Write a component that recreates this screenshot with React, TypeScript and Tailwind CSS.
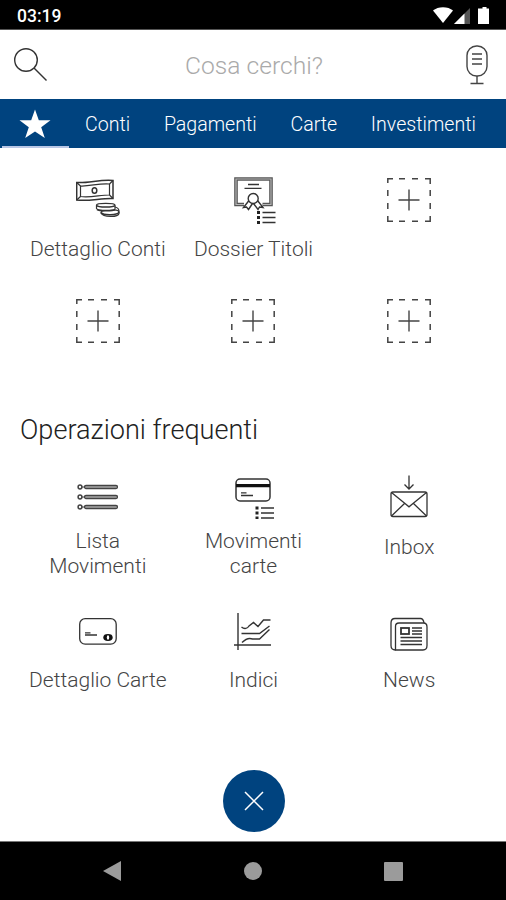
import { useState, type ReactNode } from "react";

interface Operation {
    name: string;
    icon: ReactNode;
    labelClass?: string;
}

const PlusIcon = () => (
    <svg className="w-11 h-11" viewBox="0 0 44 44" fill="none" stroke="#444">
        <path d="M0.8 5V0.8H6M12 0.8h6M25 0.8h6M38 0.8h5.2V6M43.2 12v6M43.2 25v6M43.2 38v5.2H38M31 43.2h-6M18 43.2h-6M6 43.2H0.8V38M0.8 31v-6M0.8 18v-6" strokeWidth="1.5" />
        <path d="M22 11.5v21M11.5 22h21" strokeWidth="1.4" />
    </svg>
)

const MoneyIcon = () => (
    <svg className="w-11 h-11" viewBox="0 0 44 44" fill="none" stroke="#333" strokeWidth="1.2">
        <path d="M0.7 4.500C12 5.500 25 1 37 2.500V20.500C25 20 13 23.500 0.700 22Z" strokeWidth="1.500" />
        <path d="M4.500 8C14 8.500 23 5 33.500 6V17C24 17 14 20 4.500 18.500Z" />
        <path d="M0.700 4.500l3.800 3.500M37 2.500l-3.500 3.500M37 20.500l-3.500-3.500M0.700 22l3.800-3.500" />
        <ellipse cx="18.500" cy="12.500" rx="2.300" ry="2.800" strokeWidth="1.500" />
        <path d="M25 34.500c0-3 18-4 18-0.500v1.500c-1 4-16 4-18-0.500z" fill="#fff" />
        <path d="M25 34.500c2 3 17 3 18-0.500" strokeWidth="1.500" />
        <path d="M20.500 27c0-2.300 18.500-2.300 18.500 0v4c0 2-17 2-18.500-0.500z" fill="#fff" />
        <path d="M20.500 27.500c1.500 2 17 2 18.500 0M21 31.500c2 1.800 16 1.800 18 0" strokeWidth="1.500" />
        <path d="M39 29c2.500 0.500 4 2 4 4.500" />
    </svg>
)

const TitlesIcon = () => (
    <svg className="w-11 h-12 overflow-visible" viewBox="0 0 44 48" fill="none" stroke="#333">
        <path d="M13 26.500H5V1H40V26.500H31.500" stroke="#555" strokeWidth="3.600" />
        <path d="M13 26.500H5V1H40V26.500H31.500" stroke="#b5b5b5" strokeWidth="1.200" />
        <path d="M17 6.500h11M13.500 10.300h17" strokeWidth="1.300" />
        <path d="M18 22.500L12.500 29.500L15.500 29L17.500 31.500L21.500 25.500M26.500 22.500L32 29.500L28.500 29L27 31.500L22.500 25.500" strokeWidth="1.400" />
        <circle cx="22.200" cy="20.500" r="5" strokeWidth="1.400" fill="#fff" />
        <path d="M26 34.500h3M26 39.500h3M26 44.500h3" strokeWidth="2.800" stroke="#222" />
        <path d="M31.500 34.500h13M31.500 39.500h13M31.500 44.500h13" strokeWidth="1.400" />
    </svg>
)

const ListIcon = () => (
    <svg className="w-11 h-11" viewBox="0 0 44 44" fill="none" stroke="#444">
        {[12, 22, 32].map((y) => (
            <g key={y}>
                <circle cx="4" cy={y} r="1.900" strokeWidth="1.500" />
                <path d={`M6 ${y}h2`} />
                <rect x="8.500" y={y - 1.500} width="33" height="3" rx="1.500" strokeWidth="1.300" fill="#aaa" />
            </g>
        ))}
    </svg>
)

const CardListIcon = () => (
    <svg className="w-11 h-11" viewBox="0 0 44 44" fill="none" stroke="#333">
        <rect x="5" y="4" width="34" height="22" rx="4" strokeWidth="1.500" />
        <path d="M5 10.700h34" strokeWidth="3.200" stroke="#111" />
        <path d="M10 17.800h5.500M10 20.500h12" strokeWidth="1.300" />
        <path d="M24.500 33h3M24.500 38h3M24.500 43h3" strokeWidth="2.800" stroke="#222" />
        <path d="M30 33h13M30 38h13M30 43h13" strokeWidth="1.400" />
    </svg>
)

const InboxIcon = () => (
    <svg className="w-11 h-11" viewBox="0 0 44 44" fill="none" stroke="#333" strokeWidth="1.300">
        <path d="M22 0.500v13M17.500 9.500l4.500 4.500L26.500 9.500" />
        <rect x="4" y="17" width="36" height="24.500" rx="2" />
        <path d="M4.500 17.500L18 28.500L22 31.800L26 28.500L39.500 17.500M4.500 41L17.500 28.500M39.500 41L26.500 28.500" />
    </svg>
)

const CardIcon = () => (
    <svg className="w-11 h-11" viewBox="0 0 44 44" fill="none" stroke="#333">
        <rect x="3.700" y="8.700" width="36.500" height="25.500" rx="5.500" strokeWidth="1.300" />
        <path d="M9 22.800h5.500M9 25h12" strokeWidth="1.300" />
        <ellipse cx="32" cy="27.500" rx="4.700" ry="3.400" fill="#111" stroke="none" />
        <ellipse cx="32" cy="27.500" rx="1.200" ry="2.200" fill="#fff" stroke="none" />
    </svg>
)

const ChartIcon = () => (
    <svg className="w-11 h-11" viewBox="0 0 44 44" fill="none" stroke="#333" strokeWidth="1.400">
        <path d="M7 3v37M3 35h37" />
        <path d="M10.500 17c3 2.500 6 1.500 7.500-1l4.500-3.500l4.500 4l5.500-6.500h7" />
        <path d="M10.500 23.500h18l10-7.500" />
        <path d="M11 32.500c4-4 7-5 10.500-3.500h7l10-9.500" />
    </svg>
)

const NewsIcon = () => (
    <svg className="w-11 h-11" viewBox="0 0 44 44" fill="none" stroke="#333" strokeWidth="1.300">
        <path d="M8.500 40c-3 0-4.500-2-4.500-4.500V13c0-3 1.500-4.500 4-4.500h25.500c2 0 3 1.500 3.500 4.500" />
        <path d="M8.500 40V16.500c0-2.500 1-3.500 3.500-3.500h24.500c2.500 0 3.500 1.500 3.500 4v18.500c0 3-1.500 4.500-4 4.500z" />
        <rect x="14" y="18" width="8" height="6" strokeWidth="1.800" />
        <path d="M25 18h10M25 21h10M25 24h10M13.500 27.500h21.500M13.500 31h21.500M13.500 34.500h21.500" />
    </svg>
)

const favourites: Operation[] = [
    { name: "Dettaglio Conti", icon: <MoneyIcon /> },
    { name: "Dossier Titoli", icon: <TitlesIcon /> },
    { name: "", icon: <PlusIcon /> },
    { name: "", icon: <PlusIcon /> },
    { name: "", icon: <PlusIcon /> },
    { name: "", icon: <PlusIcon /> },
]

const frequent: Operation[] = [
    { name: "Lista Movimenti", icon: <ListIcon /> },
    { name: "Movimenti carte", icon: <CardListIcon /> },
    { name: "Inbox", icon: <InboxIcon />, labelClass: "mt-4" },
    { name: "Dettaglio Carte", icon: <CardIcon />, labelClass: "mt-3.5" },
    { name: "Indici", icon: <ChartIcon />, labelClass: "mt-3.5" },
    { name: "News", icon: <NewsIcon />, labelClass: "mt-3.5" },
]

const tabs = ["Conti", "Pagamenti", "Carte", "Investimenti"]

function App() {
    const [tab, setTab] = useState("Preferiti")

    return (
        <div className="flex flex-col w-[506px] h-[900px] bg-white overflow-hidden font-['Roboto',sans-serif] font-light text-[#444]">
            <div className="flex items-center justify-between h-[30px] shrink-0 bg-black pl-[17px] pr-4 border-b border-[#555]">
                <span className="text-white font-medium text-[17.5px] mt-[3px]">03:19</span>
                <svg className="w-[58px] h-5" viewBox="0 0 58 20" fill="#fff">
                    <path d="M1 5.500C6 1 16 1 21 5.500L11 18z" />
                    <path d="M38 3v16H22z" fill="#555" />
                    <path d="M32.500 8.500V19H22z" />
                    <path d="M48 3.500h2.500V2h4v1.500H57V19H46V3.500z" />
                </svg>
            </div>

            <div className="flex items-center justify-between h-[69px] shrink-0 pl-3.5 pr-[17px]">
                <svg className="w-[34px] h-[34px]" viewBox="0 0 34 34" fill="none" stroke="#333" strokeWidth="1.400">
                    <circle cx="12" cy="12" r="11.300" />
                    <path d="M20 20L32.500 32.500" />
                </svg>
                <span className="text-[24.6px] text-[#aaa] mt-[3px] mr-[5px]">Cosa cerchi?</span>
                <svg className="w-6 h-10" viewBox="0 0 24 40" fill="none" stroke="#444" strokeWidth="1.400">
                    <rect x="2" y="1" width="20" height="30" rx="9.500" />
                    <path d="M7 9h10M7 14h10M7 19h10M12 31v7M5.500 38.500h13" />
                </svg>
            </div>

            <div className="flex h-[49px] shrink-0 bg-[#00437f] text-white text-[19.6px] font-light">
                <button className="flex items-center justify-center w-[67px] ml-0.5 pr-px border-b-2 border-[#b9c7e6]" onClick={() => setTab("Preferiti")}>
                    <svg className="w-8 h-[30px] mt-0.5" viewBox="0 0 32 30" fill="#fff">
                        <path d="M16 0.500L19.800 11.200H31.500L22.200 18.200L25.800 29L16 22.500L6.200 29L9.800 18.200L0.500 11.200H12.200z" />
                    </svg>
                </button>
                <div className="flex items-center gap-[33.7px] ml-4 pt-0.5">
                    {tabs.map((t) => (
                        <button key={t} className={t === tab ? "font-medium" : ""} onClick={() => setTab(t)}>{t}</button>
                    ))}
                </div>
            </div>

            <div className="grid grid-cols-3 gap-y-[77px] pl-5 pr-[19px] mt-[30px]">
                {favourites.map((op, i) => (
                    <div key={i} className="flex flex-col items-center h-11 text-[21px] leading-[25px] whitespace-nowrap">
                        <div className="h-11 shrink-0">{op.icon}</div>
                        {op.name && <span className="mt-[15px]">{op.name}</span>}
                    </div>
                ))}
            </div>

            <h2 className="mt-[68px] pl-5 text-[27.1px] leading-[38px] text-[#222]">Operazioni frequenti</h2>

            <div className="grid grid-cols-3 gap-y-[31px] pl-5 pr-[19px] mt-[26px]">
                {frequent.map((op) => (
                    <div key={op.name} className="flex flex-col items-center text-[21px] leading-[25px] text-center">
                        <div className="h-11 shrink-0">{op.icon}</div>
                        <span className={op.labelClass ?? "mt-2.5 w-28"}>{op.name}</span>
                    </div>
                ))}
            </div>

            <button className="flex items-center justify-center w-[62px] h-[62px] shrink-0 mt-auto mb-[9px] ml-[223px] rounded-full bg-[#00437f]">
                <svg className="w-5 h-5" viewBox="0 0 20 20" fill="none" stroke="#fff" strokeWidth="1.500">
                    <path d="M1 1l18 18M19 1L1 19" />
                </svg>
            </button>

            <div className="flex items-center justify-between h-[59px] shrink-0 bg-black border-t border-[#777] pl-[103px] pr-[103px]">
                <svg className="w-[18px] h-5" viewBox="0 0 18 20" fill="#9b9b9b"><path d="M18 0v20L0 10z" /></svg>
                <div className="w-[18px] h-[18px] rounded-full bg-[#9b9b9b]"></div>
                <div className="w-[19px] h-[19px] rounded-[1px] bg-[#9b9b9b]"></div>
            </div>
        </div>
    );
}

export default App
